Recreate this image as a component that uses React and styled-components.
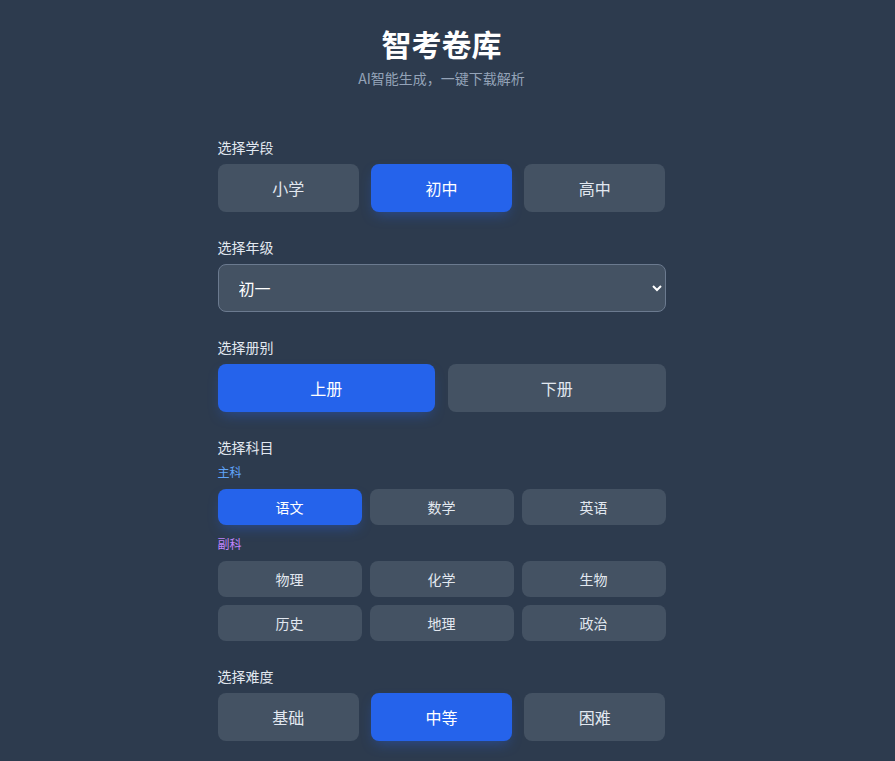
import React, { useState } from 'react'
import styled, { createGlobalStyle, css } from 'styled-components'

const GlobalStyle = createGlobalStyle`
  html, body {
    margin: 0;
    padding: 0;
    background: #2d3b4e;
  }
  body {
    font-family: "Noto Sans CJK SC", "Noto Sans", sans-serif;
    color: #e2e8f0;
  }
`

const stages = ['小学', '初中', '高中']
const volumes = ['上册', '下册']
const mainSubjects = ['语文', '数学', '英语']
const minorSubjects = ['物理', '化学', '生物', '历史', '地理', '政治']
const levels = ['基础', '中等', '困难']

function App() {
    const [stage, setStage] = useState('初中')
    const [grade, setGrade] = useState('初一')
    const [volume, setVolume] = useState('上册')
    const [subject, setSubject] = useState('语文')
    const [level, setLevel] = useState('中等')

    return (
        <Page>
            <GlobalStyle />
            <Header>
                <Title>智考卷库</Title>
                <Subtitle>AI智能生成，一键下载解析</Subtitle>
            </Header>

            <Form>
                <Section>
                    <Label>选择学段</Label>
                    <Grid cols={3} gap={12}>
                        {stages.map((s) => (
                            <BigButton key={s} active={s === stage} onClick={() => setStage(s)}>{s}</BigButton>
                        ))}
                    </Grid>
                </Section>

                <Section>
                    <Label>选择年级</Label>
                    <Select value={grade} onChange={(e) => setGrade(e.target.value)}>
                        <option>初一</option>
                        <option>初二</option>
                        <option>初三</option>
                    </Select>
                </Section>

                <Section>
                    <Label>选择册别</Label>
                    <Grid cols={2} gap={13}>
                        {volumes.map((v) => (
                            <BigButton key={v} active={v === volume} onClick={() => setVolume(v)}>{v}</BigButton>
                        ))}
                    </Grid>
                </Section>

                <Section>
                    <Label>选择科目</Label>
                    <SubLabel tone="main">主科</SubLabel>
                    <Grid cols={3} gap={8}>
                        {mainSubjects.map((s) => (
                            <SmallButton key={s} active={s === subject} onClick={() => setSubject(s)}>{s}</SmallButton>
                        ))}
                    </Grid>
                    <SubLabel tone="minor" spaced>副科</SubLabel>
                    <Grid cols={3} gap={8}>
                        {minorSubjects.map((s) => (
                            <SmallButton key={s} active={s === subject} onClick={() => setSubject(s)}>{s}</SmallButton>
                        ))}
                    </Grid>
                </Section>

                <Section>
                    <Label>选择难度</Label>
                    <Grid cols={3} gap={12}>
                        {levels.map((l) => (
                            <BigButton key={l} active={l === level} onClick={() => setLevel(l)}>{l}</BigButton>
                        ))}
                    </Grid>
                </Section>
            </Form>
        </Page>
    )
}

export default App

// the original page had a scrollbar eating ~12px on the right
const Page = styled.div`
    padding: 23px 28px 40px 16px;
`
const Header = styled.header`
    text-align: center;
    margin-bottom: 49px;
`
const Title = styled.h1`
    margin: 0 0 5px;
    font-size: 30px;
    line-height: 40px;
    font-weight: 700;
    color: #ffffff;
`
const Subtitle = styled.p`
    margin: 0;
    font-size: 14px;
    line-height: 20px;
    color: #94a3b8;
`
const Form = styled.div`
    width: 448px;
    margin: 0 auto;
    display: flex;
    flex-direction: column;
    gap: 25px;
`
const Section = styled.section`
    display: flex;
    flex-direction: column;
`
const Label = styled.div`
    font-size: 14px;
    line-height: 20px;
    margin-bottom: 7px;
    color: #e2e8f0;
`
const SubLabel = styled.div`
    font-size: 12px;
    line-height: 16px;
    margin-bottom: 9px;
    margin-top: ${(p) => (p.spaced ? '11px' : '0')};
    color: ${(p) => (p.tone === 'main' ? '#60a5fa' : '#c084fc')};
`
const Grid = styled.div`
    display: grid;
    grid-template-columns: repeat(${(p) => p.cols}, 1fr);
    gap: ${(p) => p.gap}px;
`
const buttonBase = css`
    border: none;
    border-radius: 8px;
    cursor: pointer;
    font-family: inherit;
    font-weight: 400;
    background: ${(p) => (p.active ? '#2563eb' : '#445263')};
    color: ${(p) => (p.active ? '#ffffff' : '#e2e8f0')};
    box-shadow: ${(p) => (p.active ? '0 6px 14px -4px rgba(37, 99, 235, 0.45)' : 'none')};
`
const BigButton = styled.button`
    ${buttonBase};
    height: 48px;
    font-size: 16px;
`
const SmallButton = styled.button`
    ${buttonBase};
    height: 36px;
    font-size: 14px;
`
const Select = styled.select`
    height: 48px;
    width: 100%;
    padding: 0 12px 0 16px;
    border: 1px solid #6b7a8f;
    border-radius: 8px;
    background: #445263;
    color: #ffffff;
    font-family: inherit;
    font-size: 16px;
    color-scheme: dark;
    outline: none;
`
